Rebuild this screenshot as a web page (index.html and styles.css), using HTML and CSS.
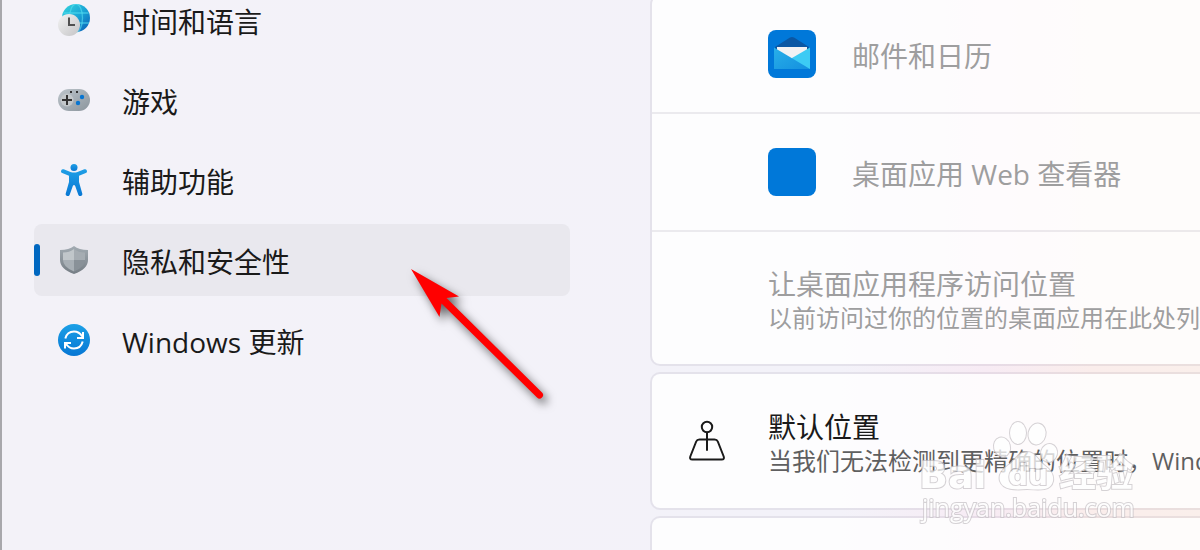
FILE: index.html
```html
<!DOCTYPE html>
<html lang="zh-CN">
<head>
<meta charset="utf-8">
<title>设置</title>
<link rel="stylesheet" href="styles.css">
</head>
<body>
<div class="window">
  <nav class="sidebar">
    <a class="nav-item" href="#time">
      <svg class="nav-icon" viewBox="0 0 32 32" aria-hidden="true">
        <defs>
          <linearGradient id="globe" x1="0" y1="0" x2="1" y2="1"><stop offset="0" stop-color="#35d6dc"/><stop offset=".5" stop-color="#1ba6d6"/><stop offset="1" stop-color="#0859b5"/></linearGradient>
          <linearGradient id="clock" x1="0" y1="0" x2="1" y2="1"><stop offset="0" stop-color="#f3f3f3"/><stop offset="1" stop-color="#c4c4c6"/></linearGradient>
        </defs>
        <circle cx="18" cy="14" r="14" fill="url(#globe)"/>
        <g fill="none" stroke="#58dff2" stroke-opacity=".6" stroke-width="1.3"><path d="M5.500 9h25M12 19h19"/><ellipse cx="18" cy="14" rx="6.500" ry="14"/></g>
        <circle cx="11" cy="21" r="11" fill="url(#clock)"/>
        <path d="M11 13.500V21h6" fill="none" stroke="#505050" stroke-width="2"/>
      </svg>
      <span class="nav-label">时间和语言</span>
    </a>
    <a class="nav-item" href="#gaming">
      <svg class="nav-icon" viewBox="0 0 32 32" aria-hidden="true">
        <defs><linearGradient id="pad" x1="0" y1="0" x2="1" y2="1"><stop offset="0" stop-color="#bdc5cb"/><stop offset="1" stop-color="#8b959d"/></linearGradient></defs>
        <rect y="5" width="32" height="22" rx="11" fill="url(#pad)"/>
        <circle cx="9" cy="16" r="6.500" fill="#c2c7ca"/>
        <path d="M9 11v10M4 16h10" stroke="#333" stroke-width="2"/>
        <path d="M12 7h2v2h-2zM18 7h2v2h-2z" fill="#333"/>
        <circle cx="24" cy="13" r="2.200" fill="#0875d1"/><circle cx="20" cy="19" r="2.200" fill="#0875d1"/>
      </svg>
      <span class="nav-label">游戏</span>
    </a>
    <a class="nav-item" href="#accessibility">
      <svg class="nav-icon" viewBox="0 0 32 32" aria-hidden="true">
        <defs><linearGradient id="person" x1="0" y1="0" x2="0" y2="1"><stop offset="0" stop-color="#1f9fe6"/><stop offset="1" stop-color="#0878d4"/></linearGradient></defs>
        <g fill="url(#person)"><circle cx="16" cy="3.500" r="3.500"/>
        <path d="M5.700 5.300 12.500 8q3.500 1.200 7 0l6.800-2.700a2 2 0 0 1 1.500 3.700L21 11.800v6.200l3.200 11.300a2 2 0 0 1-3.900 1.400L17.200 22q-1.200-2-2.400 0l-3.100 8.700a2 2 0 0 1-3.900-1.400L11 18v-6.200L4.200 9a2 2 0 0 1 1.500-3.700z"/></g>
      </svg>
      <span class="nav-label">辅助功能</span>
    </a>
    <a class="nav-item selected" href="#privacy" aria-current="page">
      <svg class="nav-icon" viewBox="0 0 32 32" aria-hidden="true">
        <defs><linearGradient id="rim" x1="0" y1="0" x2="0" y2="1"><stop offset="0" stop-color="#a2abb2"/><stop offset="1" stop-color="#757d84"/></linearGradient></defs>
        <path d="M16 2q5 4 14 4v10q0 9-14 14Q2 25 2 16V6q9 0 14-4z" fill="url(#rim)"/>
        <path d="M16 5v11H5V8.500Q11.500 8.500 16 5z" fill="#c0c6ca"/>
        <path d="M16 5v11h11V8.500Q20.500 8.500 16 5z" fill="#a5acb2"/>
        <path d="M5 16h11v11.500Q5 23 5 16z" fill="#a8afb5"/>
        <path d="M27 16H16v11.500Q27 23 27 16z" fill="#899198"/>
      </svg>
      <span class="nav-label">隐私和安全性</span>
    </a>
    <a class="nav-item" href="#update">
      <svg class="nav-icon" viewBox="0 0 32 32" aria-hidden="true">
        <defs><linearGradient id="upd" x1="0" y1="0" x2="0" y2="1"><stop offset="0" stop-color="#1ba0e6"/><stop offset="1" stop-color="#0677d4"/></linearGradient></defs>
        <circle cx="16" cy="16" r="16" fill="url(#upd)"/>
        <path d="M7.300 14.500C8.600 9.500 11.800 7.500 16 7.500c3.600 0 6.300 1.800 8.200 5M25 8v6h-6M24.700 17.500c-1.300 5-4.500 7-8.700 7-3.600 0-6.300-1.800-8.200-5M7 24.500V19h6" fill="none" stroke="#fff" stroke-width="2"/>
      </svg>
      <span class="nav-label">Windows 更新</span>
    </a>
  </nav>

  <main class="content">
    <section class="card app-card">
      <div class="app-row">
        <svg class="app-icon" viewBox="0 0 48 48" aria-hidden="true">
          <defs><linearGradient id="env" x1="0" y1="0" x2="1" y2="1"><stop offset="0" stop-color="#28afe9"/><stop offset="1" stop-color="#1490df"/></linearGradient></defs>
          <rect width="48" height="48" rx="8" fill="#0078d9"/>
          <path d="M7 17 22 7.500q2-1.200 4 0L41 17v3H7z" fill="#0a57a4"/>
          <path d="M9 17h30v6L24 33 9 23z" fill="#f2f2f4"/>
          <path d="M24 28 42 17.500V39H24z" fill="#3ccbf4"/>
          <path d="M6 17.500 42 39H6z" fill="url(#env)"/>
        </svg>
        <span class="title">邮件和日历</span>
      </div>
      <div class="app-row">
        <span class="app-icon plain"></span>
        <span class="title">桌面应用 Web 查看器</span>
      </div>
      <div class="desktop-row">
        <h2 class="title">让桌面应用程序访问位置</h2>
        <p class="detail">以前访问过你的位置的桌面应用在此处列</p>
      </div>
    </section>

    <section class="card default-card">
      <svg class="place-icon" viewBox="0 0 40 44" aria-hidden="true">
        <g fill="none" stroke="#1a1a1a" stroke-width="2" stroke-linejoin="round" stroke-linecap="round"><circle cx="21" cy="8" r="5.200"/><path d="M21 13.500V31M13.500 20.500h15q2.500 0 3.300 2l5.900 15q1 3-2 3H6.300q-3 0-2-3l5.900-15q.8-2 3.300-2z"/></g>
      </svg>
      <div class="default-text">
        <h2 class="title">默认位置</h2>
        <p class="detail">当我们无法检测到更精确的位置时，Windows</p>
      </div>
    </section>

    <section class="card next-card"></section>
  </main>
</div>

<svg class="pointer" viewBox="0 0 160 150" aria-hidden="true">
  <path d="M11 9 59 36.500 46.500 38 142 132.500a3.500 3.500 0 0 1-5 5L41.500 43.500 39.500 57z" fill="#f00"/>
</svg>

<svg class="watermark" viewBox="0 0 230 110" aria-hidden="true">
  <g class="mark">
    <ellipse cx="81" cy="37" rx="8" ry="9.500" transform="rotate(-15 81 37)"/>
    <ellipse cx="97" cy="23" rx="8" ry="11"/>
    <ellipse cx="116" cy="24" rx="8.500" ry="10.500" transform="rotate(12 116 24)"/>
    <ellipse cx="128" cy="43" rx="8" ry="9" transform="rotate(15 128 43)"/>
    <path d="M106 42c8 0 10 7 17 13 7 5 10 10 9 16-2 10-13 9-26 8-12 1-24 1-27-8-2-7 3-12 10-17 7-6 9-12 17-12z"/>
    <text class="brand" x="-2" y="78">Bai</text>
    <text class="du" x="87" y="75">du</text>
    <text class="brand-cn" x="138" y="77">经验</text>
    <text class="site" x="1" y="107">jingyan.baidu.com</text>
  </g>
</svg>
</body>
</html>
```
FILE: styles.css
```css
* { box-sizing: border-box; }

body {
  margin: 0;
  overflow: hidden;
  position: relative;
  font-family: "Open Sans", "Noto Sans CJK SC", sans-serif;
  color: #1a1a1a;
}

.window {
  display: grid;
  grid-template-columns: 568px minmax(0, 1fr);
  column-gap: 80px;
  height: 100vh;
  overflow: hidden;
  border-left: 2px solid #a8a8ac;
  background: linear-gradient(90deg, #f3f2f8 0, #f3f2f9 70%, #f7ebf4 82%, #faedeb 91%, #faefeb 100%);
}

.sidebar {
  display: flex;
  flex-direction: column;
  gap: 8px;
  margin-top: -16px;
  padding-left: 32px;
}

.nav-item {
  display: flex;
  align-items: center;
  gap: 32px;
  flex: none;
  height: 72px;
  padding-left: 24px;
  border-radius: 8px;
  color: inherit;
  font-size: 28px;
  line-height: 40px;
  text-decoration: none;
}

.nav-label { padding-top: 4px; }

.nav-item.selected {
  padding-left: 0;
  background: #e9e8ee;
}

.nav-item.selected::before {
  content: "";
  width: 6px;
  height: 32px;
  margin-right: -14px;
  border-radius: 3px;
  background: #0067c0;
}

.nav-icon { width: 32px; height: 32px; flex: none; }

.content {
  display: flex;
  flex-direction: column;
  gap: 6px;
  margin-top: -6px;
}

.card {
  flex: none;
  border: 2px solid rgba(60, 40, 80, .08);
  border-right: 0;
  border-radius: 10px 0 0 10px;
  background: rgba(255, 255, 255, .8);
  background-clip: padding-box;
  overflow: hidden;
  white-space: nowrap;
}

.app-row {
  display: flex;
  align-items: center;
  gap: 36px;
  height: 118px;
  padding-left: 116px;
  border-bottom: 2px solid rgba(60, 40, 80, .09);
}

.app-icon { width: 48px; height: 48px; flex: none; }
.app-icon.plain { border-radius: 8px; background: #0078d9; }

.title {
  margin: 0;
  font-size: 28px;
  font-weight: 400;
  line-height: 36px;
}

.app-row .title { padding-top: 4px; }

.detail {
  margin: 0;
  font-size: 24px;
  line-height: 32px;
}

.app-card { color: #9e9e9f; }

.desktop-row { height: 132px; padding: 34px 0 0 116px; }

.default-card {
  display: flex;
  align-items: center;
  gap: 42px;
  height: 138px;
  padding-left: 34px;
}

.default-text { padding-top: 4px; }
.default-card .detail { color: #5f5f60; }
.place-icon { width: 40px; height: 44px; flex: none; }
.next-card { height: 138px; }

.pointer {
  position: absolute;
  left: 400px;
  top: 260px;
  width: 160px;
  height: 150px;
  filter: drop-shadow(4px 5px 5px rgba(0, 0, 0, .6));
  pointer-events: none;
}

.watermark {
  position: absolute;
  left: 921px;
  top: 410px;
  width: 230px;
  height: 110px;
  overflow: visible;
  pointer-events: none;
}

.mark {
  fill: #fff;
  stroke: #c8c4c8;
  stroke-width: 2px;
  paint-order: stroke;
  opacity: .75;
}

.brand { font: 700 38px "DejaVu Sans", sans-serif; }
.du { font: 700 28px "DejaVu Sans", sans-serif; }
.brand-cn { font: 700 37px "Noto Sans CJK SC", sans-serif; }
.site { font: 400 25px "Open Sans", sans-serif; }
```
